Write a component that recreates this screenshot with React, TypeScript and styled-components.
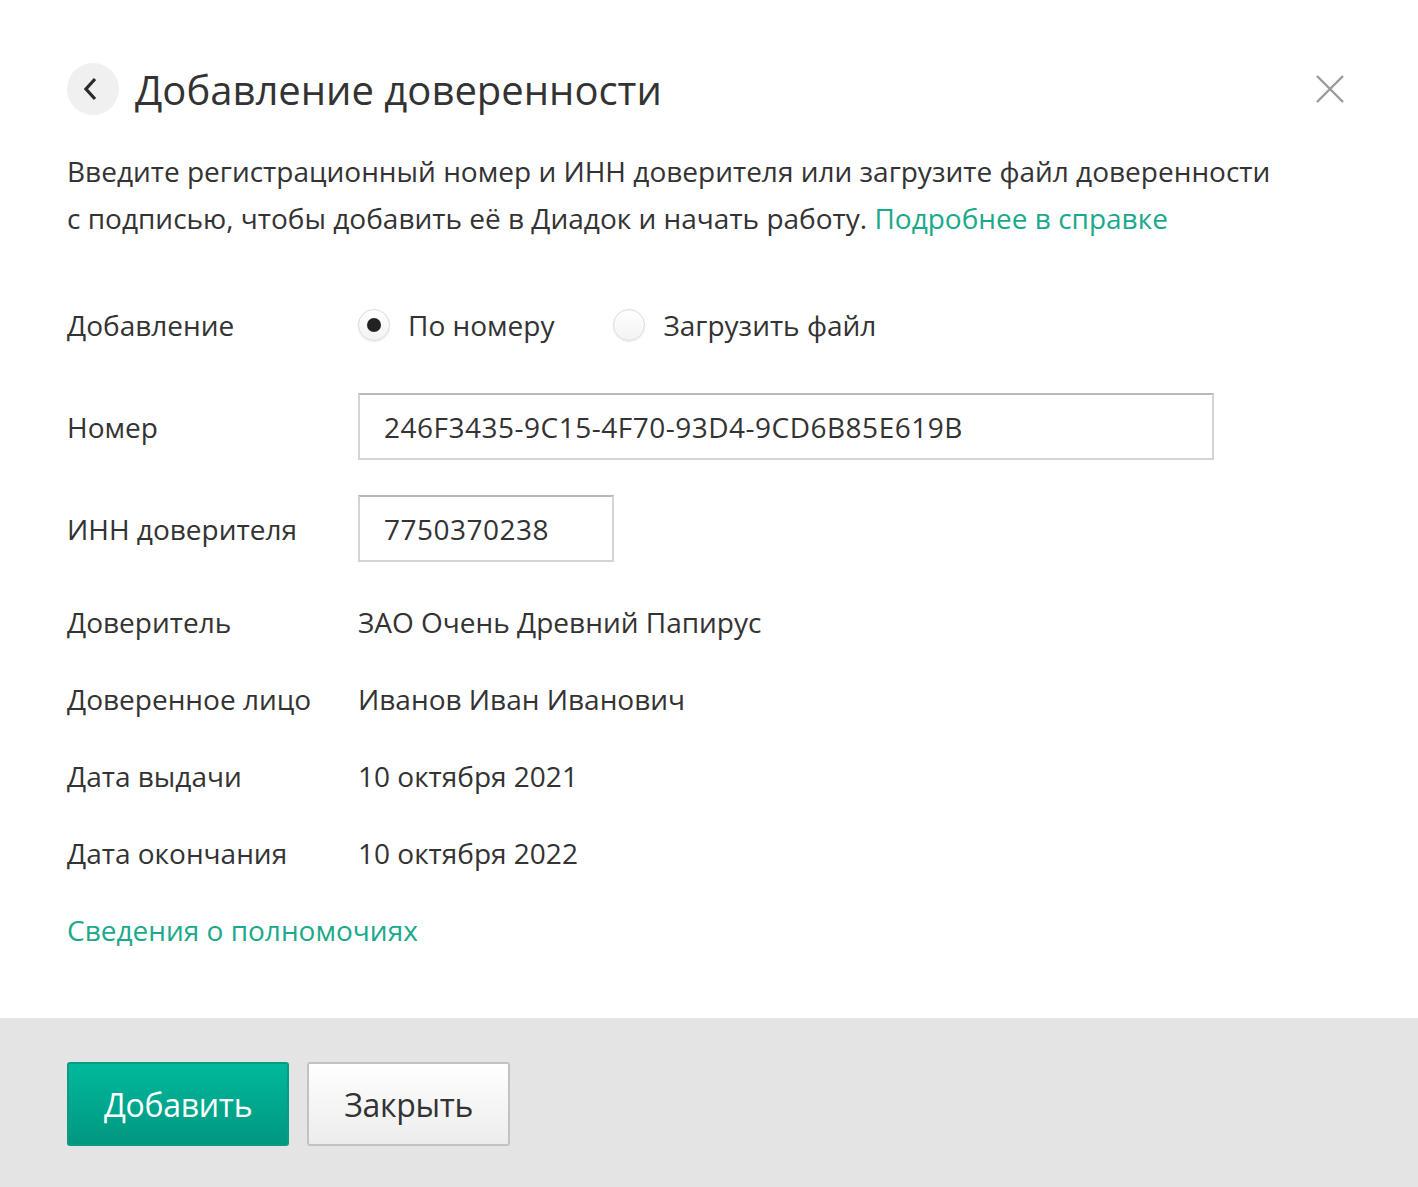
import styled, { createGlobalStyle } from 'styled-components';

const GlobalStyle = createGlobalStyle`
    html, body {
        margin: 0;
        padding: 0;
        background: #ffffff;
    }
    body {
        font-family: 'Open Sans', 'Noto Sans', sans-serif;
        color: #333333;
    }
`;

interface RowProps {
    $top: number;
}

interface ButtonProps {
    $primary?: boolean;
}

const details = [
    { label: 'Доверитель', value: 'ЗАО Очень Древний Папирус' },
    { label: 'Доверенное лицо', value: 'Иванов Иван Иванович' },
    { label: 'Дата выдачи', value: '10 октября 2021' },
    { label: 'Дата окончания', value: '10 октября 2022' },
];

export default function App() {
    return (
        <Modal>
            <GlobalStyle />
            <Body>
                <Header>
                    <BackButton aria-label="Назад">
                        <svg width="14" height="24" viewBox="0 0 14 24">
                            <path d="M11 2 L2 12 L11 22" fill="none" stroke="#2b2b2b" strokeWidth="3.2" />
                        </svg>
                    </BackButton>
                    <Title>Добавление доверенности</Title>
                    <CloseButton aria-label="Закрыть">
                        <svg width="30" height="30" viewBox="0 0 30 30">
                            <path d="M2 2 L28 28 M28 2 L2 28" stroke="#9a9a9a" strokeWidth="2.4" />
                        </svg>
                    </CloseButton>
                </Header>

                <Description>
                    Введите регистрационный номер и ИНН доверителя или загрузите файл доверенности
                    <br />с подписью, чтобы добавить её в Диадок и начать работу.{' '}
                    <Link>Подробнее в справке</Link>
                </Description>

                <Form>
                    <Row $top={49}>
                        <Label>Добавление</Label>
                        <RadioGroup>
                            <RadioOption>
                                <Radio $checked />
                                По номеру
                            </RadioOption>
                            <RadioOption>
                                <Radio />
                                Загрузить файл
                            </RadioOption>
                        </RadioGroup>
                    </Row>
                    <Row $top={35}>
                        <Label>Номер</Label>
                        <Input style={{ width: 856 }} defaultValue="246F3435-9C15-4F70-93D4-9CD6B85E619B" />
                    </Row>
                    <Row $top={35}>
                        <Label>ИНН доверителя</Label>
                        <Input style={{ width: 256 }} defaultValue="7750370238" />
                    </Row>
                    {details.map((item, i) => (
                        <TextRow key={item.label} $top={i === 0 ? 36 : 30}>
                            <Label>{item.label}</Label>
                            <Value>{item.value}</Value>
                        </TextRow>
                    ))}
                    <TextRow $top={30}>
                        <FullLink>Сведения о полномочиях</FullLink>
                    </TextRow>
                </Form>
            </Body>
            <Footer>
                <Button $primary>Добавить</Button>
                <Button>Закрыть</Button>
            </Footer>
        </Modal>
    );
}

const Modal = styled.div`
    width: 1418px;
    height: 1187px;
    display: flex;
    flex-direction: column;
    background: #ffffff;
`;

const Body = styled.div`
    flex: 1;
    padding: 63px 73px 0 67px;
`;

const Header = styled.div`
    display: flex;
    align-items: center;
    height: 52px;
`;

const BackButton = styled.button`
    width: 52px;
    height: 52px;
    border-radius: 50%;
    border: none;
    background: #f0f0f0;
    display: flex;
    align-items: center;
    justify-content: center;
    padding: 0 4px 0 0;
    cursor: pointer;
`;

const Title = styled.h1`
    margin: 0 0 0 16px;
    font-size: 40px;
    font-weight: 400;
    color: #333333;
`;

const CloseButton = styled.button`
    margin-left: auto;
    width: 30px;
    height: 30px;
    padding: 0;
    border: none;
    background: none;
    cursor: pointer;
`;

const Description = styled.p`
    margin: 33px 0 0;
    font-size: 28px;
    line-height: 47px;
    color: #333333;
    white-space: nowrap;
`;

const Link = styled.a`
    color: #1ba98b;
    cursor: pointer;
`;

const FullLink = styled(Link)`
    grid-column: 1 / -1;
`;

const Form = styled.div`
    display: flex;
    flex-direction: column;
    font-size: 28px;
`;

const Row = styled.div<RowProps>`
    display: grid;
    grid-template-columns: 291px 1fr;
    align-items: center;
    height: 67px;
    margin-top: ${(props) => props.$top}px;
`;

const TextRow = styled(Row)`
    height: 47px;
`;

const Label = styled.div`
    color: #333333;
`;

const Value = styled.div`
    color: #333333;
`;

const RadioGroup = styled.div`
    display: flex;
    align-items: center;
    gap: 59px;
`;

const RadioOption = styled.label`
    display: flex;
    align-items: center;
    gap: 18px;
    color: #333333;
    cursor: pointer;
`;

const Radio = styled.span<{ $checked?: boolean }>`
    position: relative;
    width: 32px;
    height: 32px;
    box-sizing: border-box;
    border-radius: 50%;
    border: 1px solid #dcdcdc;
    background: linear-gradient(#ffffff, #f3f3f3);
    box-shadow: 0 1px 2px rgba(0, 0, 0, 0.08);

    &::after {
        content: '';
        position: absolute;
        left: 8px;
        top: 8px;
        width: 14px;
        height: 14px;
        border-radius: 50%;
        background: #222222;
        display: ${(props) => (props.$checked ? 'block' : 'none')};
    }
`;

const Input = styled.input`
    box-sizing: border-box;
    height: 67px;
    padding: 0 24px;
    border: 2px solid #d4d4d4;
    border-top-color: #b9b9b9;
    font-family: inherit;
    font-size: 28px;
    letter-spacing: 0.5px;
    color: #333333;
    outline: none;
`;

const Footer = styled.div`
    display: flex;
    gap: 18px;
    height: 169px;
    box-sizing: border-box;
    padding: 44px 67px 0;
    background: #e4e4e4;
`;

const Button = styled.button<ButtonProps>`
    height: 84px;
    box-sizing: border-box;
    padding: 0 35px;
    border-radius: 3px;
    font-family: inherit;
    font-size: 32px;
    letter-spacing: -0.3px;
    cursor: pointer;
    color: ${(props) => (props.$primary ? '#ffffff' : '#333333')};
    border: 2px solid ${(props) => (props.$primary ? '#0a9b82' : '#c2c2c2')};
    background: ${(props) =>
        props.$primary
            ? 'linear-gradient(#00b99c, #00977f)'
            : 'linear-gradient(#ffffff, #ececec)'};
`;
